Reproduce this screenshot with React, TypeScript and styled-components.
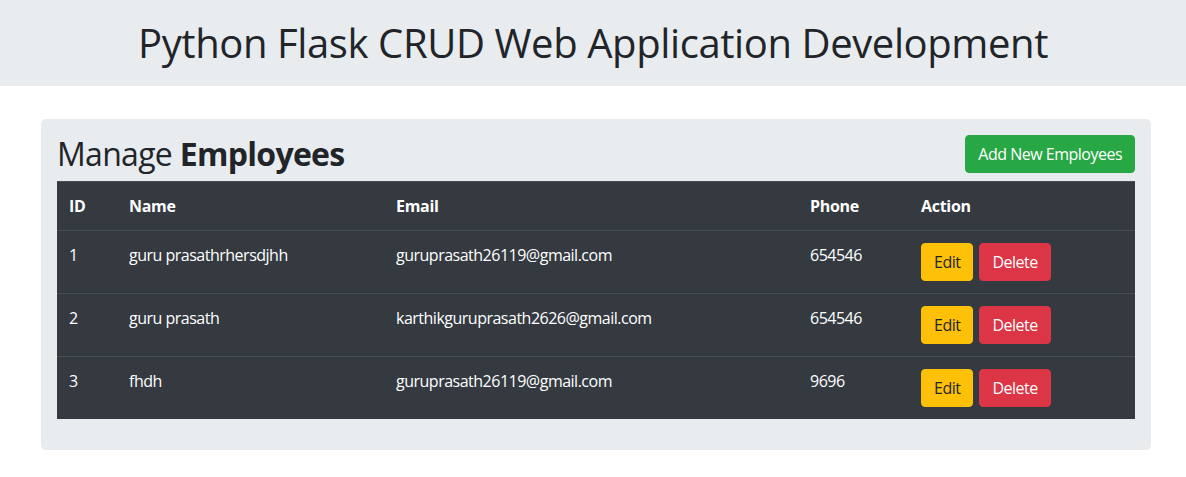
import React from "react";
import styled, { createGlobalStyle } from "styled-components";

const GlobalStyle = createGlobalStyle`
  * { box-sizing: border-box; }
  body {
    margin: 0;
    background: #ffffff;
    color: #212529;
    font-family: "Open Sans", "Noto Sans", sans-serif;
    font-size: 16px;
    line-height: 1.5;
  }
`;

const Header = styled.header`
  background: #e9ecef;
  height: 86px;
  display: flex;
  align-items: center;
  justify-content: center;
`;

const Title = styled.h1`
  margin: 0;
  font-size: 40px;
  font-weight: 500;
  line-height: 48px;
  letter-spacing: -0.4px;
  color: #212529;
`;

const Page = styled.main`
  padding: 33px 35px 0 41px;
`;

const Panel = styled.section`
  background: #e9ecef;
  border-radius: 5px;
  padding: 16px 16px 31px;
`;

const TopRow = styled.div`
  display: flex;
  justify-content: space-between;
  align-items: flex-start;
  margin-bottom: 8px;
`;

const Heading = styled.h2`
  margin: 0;
  font-size: 32px;
  font-weight: 500;
  line-height: 38px;
  letter-spacing: -0.7px;
  color: #212529;
  b { font-weight: 700; }
`;

const Button = styled.button<{ $variant: "success" | "warning" | "danger" }>`
  display: inline-block;
  font-family: inherit;
  font-size: 16px;
  line-height: 24px;
  padding: 6px 12px;
  border: 1px solid transparent;
  border-radius: 4px;
  cursor: pointer;
  letter-spacing: -0.5px;
  background: ${(p) =>
    p.$variant === "success" ? "#28a745" : p.$variant === "warning" ? "#ffc107" : "#dc3545"};
  border-color: ${(p) =>
    p.$variant === "success" ? "#28a745" : p.$variant === "warning" ? "#ffc107" : "#dc3545"};
  color: ${(p) => (p.$variant === "warning" ? "#212529" : "#ffffff")};
`;

const Table = styled.table`
  width: 100%;
  border-collapse: collapse;
  table-layout: fixed;
  background: #343a40;
  color: #ffffff;
`;

const Th = styled.th`
  text-align: left;
  font-weight: 700;
  padding: 12px;
  border-top: 1px solid #454d55;
  letter-spacing: -0.3px;
`;

const Td = styled.td`
  padding: 12px;
  vertical-align: top;
  border-top: 1px solid #454d55;
  letter-spacing: -0.5px;
  white-space: nowrap;
`;

const Actions = styled.div`
  display: flex;
  gap: 6px;
`;

const employees = [
  { id: 1, name: "guru prasathrhersdjhh", email: "guruprasath26119@gmail.com", phone: "654546" },
  { id: 2, name: "guru prasath", email: "karthikguruprasath2626@gmail.com", phone: "654546" },
  { id: 3, name: "fhdh", email: "guruprasath26119@gmail.com", phone: "9696" },
];

export default function App() {
  return (
    <>
      <GlobalStyle />
      <Header>
        <Title>Python Flask CRUD Web Application Development</Title>
      </Header>
      <Page>
        <Panel>
          <TopRow>
            <Heading>
              Manage <b>Employees</b>
            </Heading>
            <Button $variant="success">Add New Employees</Button>
          </TopRow>
          <Table>
            <colgroup>
              <col style={{ width: 60 }} />
              <col style={{ width: 267 }} />
              <col style={{ width: 414 }} />
              <col style={{ width: 111 }} />
              <col />
            </colgroup>
            <thead>
              <tr>
                <Th>ID</Th>
                <Th>Name</Th>
                <Th>Email</Th>
                <Th>Phone</Th>
                <Th>Action</Th>
              </tr>
            </thead>
            <tbody>
              {employees.map((e) => (
                <tr key={e.id}>
                  <Td>{e.id}</Td>
                  <Td>{e.name}</Td>
                  <Td>{e.email}</Td>
                  <Td>{e.phone}</Td>
                  <Td>
                    <Actions>
                      <Button $variant="warning">Edit</Button>
                      <Button $variant="danger">Delete</Button>
                    </Actions>
                  </Td>
                </tr>
              ))}
            </tbody>
          </Table>
        </Panel>
      </Page>
    </>
  );
}
